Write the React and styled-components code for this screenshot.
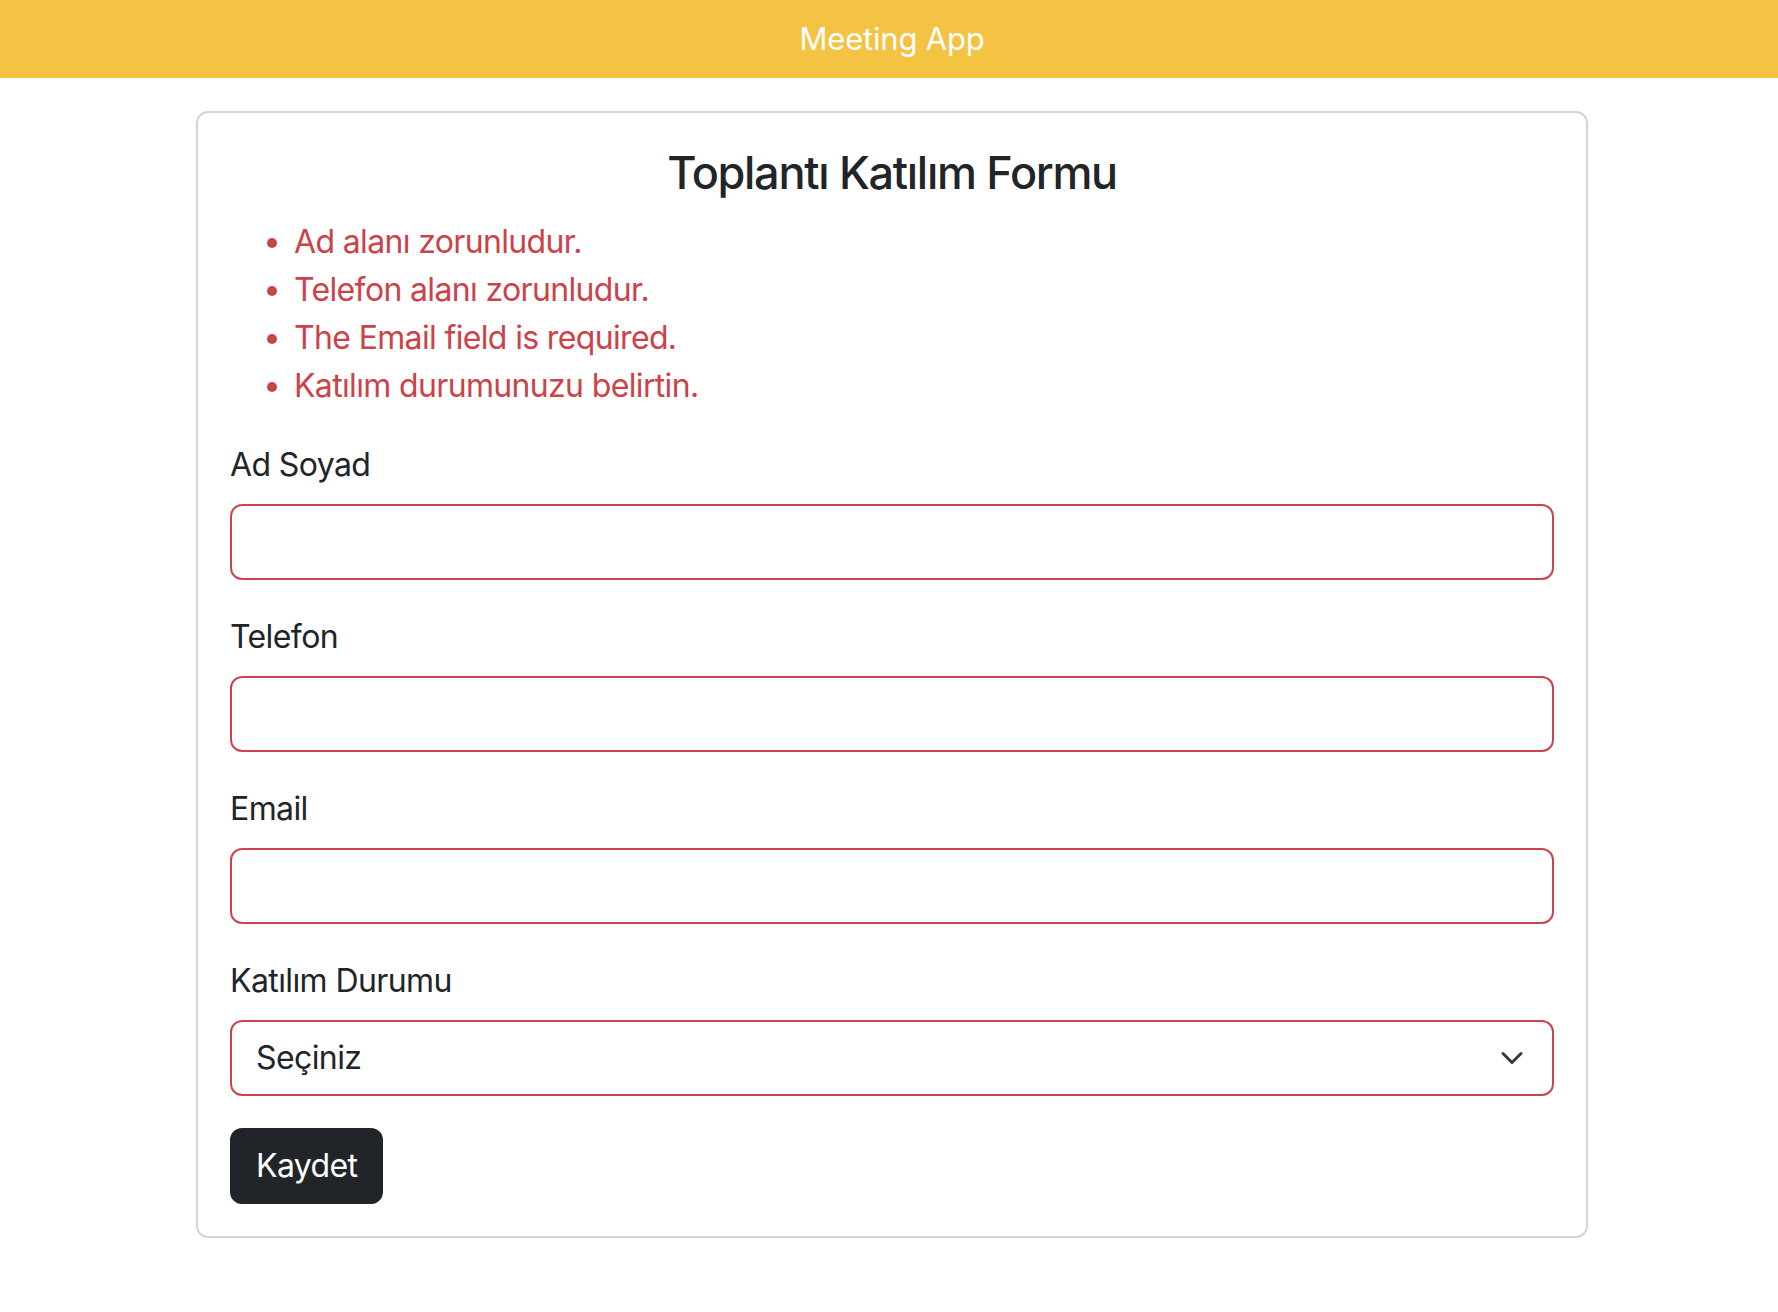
import React from "react";
import styled, { createGlobalStyle } from "styled-components";

const Global = createGlobalStyle`
  html, body { margin: 0; padding: 0; background: #ffffff; }
  body {
    font-family: Inter, "Noto Sans", "Liberation Sans", sans-serif;
    color: #212529;
    font-size: 32px;
    line-height: 1.5;
  }
  * { box-sizing: border-box; }
`;

const Header = styled.header`
  height: 78px;
  background: #f5c344;
  display: flex;
  align-items: center;
  justify-content: center;
`;

const Brand = styled.div`
  color: #ffffff;
  font-size: 31px;
  line-height: 1;
  font-weight: 400;
  letter-spacing: -0.2px;
  padding: 0 0 2px 6px;
`;

const Card = styled.main`
  width: 1392px;
  margin: 33px 0 0 calc(50% - 693px);
  border: 2px solid #d4d4d4;
  border-radius: 12px;
  padding: 32px;
`;

const Title = styled.h4`
  margin: 0 0 16px;
  font-size: 45px;
  line-height: 56px;
  font-weight: 500;
  text-align: center;
  letter-spacing: -1.3px;
  color: #212529;
`;

const ErrorList = styled.ul`
  margin: 0 0 30px;
  padding: 1px 0 0 64px;
  color: #cb4249;
  font-size: 32px;
  line-height: 48px;
  letter-spacing: -0.65px;
`;

const Group = styled.div`
  margin-bottom: 32px;
`;

const Label = styled.label`
  display: block;
  margin-bottom: 16px;
  font-size: 32px;
  line-height: 48px;
  letter-spacing: -0.6px;
  transform: translateY(1px);
`;

const Input = styled.input`
  display: block;
  width: 100%;
  height: 76px;
  padding: 12px 24px;
  font: inherit;
  border: 2px solid #cb444b;
  border-radius: 12px;
  background: #ffffff;
  outline: none;
`;

const SelectWrap = styled.div`
  position: relative;
`;

const Select = styled.select`
  display: block;
  width: 100%;
  height: 76px;
  padding: 12px 72px 12px 24px;
  font: inherit;
  letter-spacing: -0.6px;
  color: #212529;
  border: 2px solid #cb444b;
  border-radius: 12px;
  background: #ffffff;
  appearance: none;
  -webkit-appearance: none;
  outline: none;
`;

const Chevron = styled.svg`
  position: absolute;
  right: 26px;
  top: 50%;
  width: 32px;
  height: 24px;
  margin-top: -12px;
  pointer-events: none;
`;

const Button = styled.button`
  display: inline-block;
  padding: 12px 24px;
  font: inherit;
  font-size: 32px;
  line-height: 48px;
  letter-spacing: -0.6px;
  color: #ffffff;
  background: #212529;
  border: 2px solid #212529;
  border-radius: 12px;
  cursor: pointer;
`;

const errors = [
  "Ad alanı zorunludur.",
  "Telefon alanı zorunludur.",
  "The Email field is required.",
  "Katılım durumunuzu belirtin.",
];

export default function App() {
  return (
    <>
      <Global />
      <Header>
        <Brand>Meeting App</Brand>
      </Header>
      <Card>
        <Title>Toplantı Katılım Formu</Title>
        <ErrorList>
          {errors.map((e) => (
            <li key={e}>{e}</li>
          ))}
        </ErrorList>
        <Group>
          <Label htmlFor="ad">Ad Soyad</Label>
          <Input id="ad" type="text" />
        </Group>
        <Group>
          <Label htmlFor="tel">Telefon</Label>
          <Input id="tel" type="text" />
        </Group>
        <Group>
          <Label htmlFor="email">Email</Label>
          <Input id="email" type="email" />
        </Group>
        <Group>
          <Label htmlFor="durum">Katılım Durumu</Label>
          <SelectWrap>
            <Select id="durum" defaultValue="">
              <option value="">Seçiniz</option>
              <option value="1">Katılıyorum</option>
              <option value="0">Katılmıyorum</option>
            </Select>
            <Chevron viewBox="0 0 16 16" aria-hidden="true">
              <path
                d="M2 5l6 6 6-6"
                fill="none"
                stroke="#343a40"
                strokeWidth="2"
                strokeLinecap="round"
                strokeLinejoin="round"
              />
            </Chevron>
          </SelectWrap>
        </Group>
        <Button type="button">Kaydet</Button>
      </Card>
    </>
  );
}
